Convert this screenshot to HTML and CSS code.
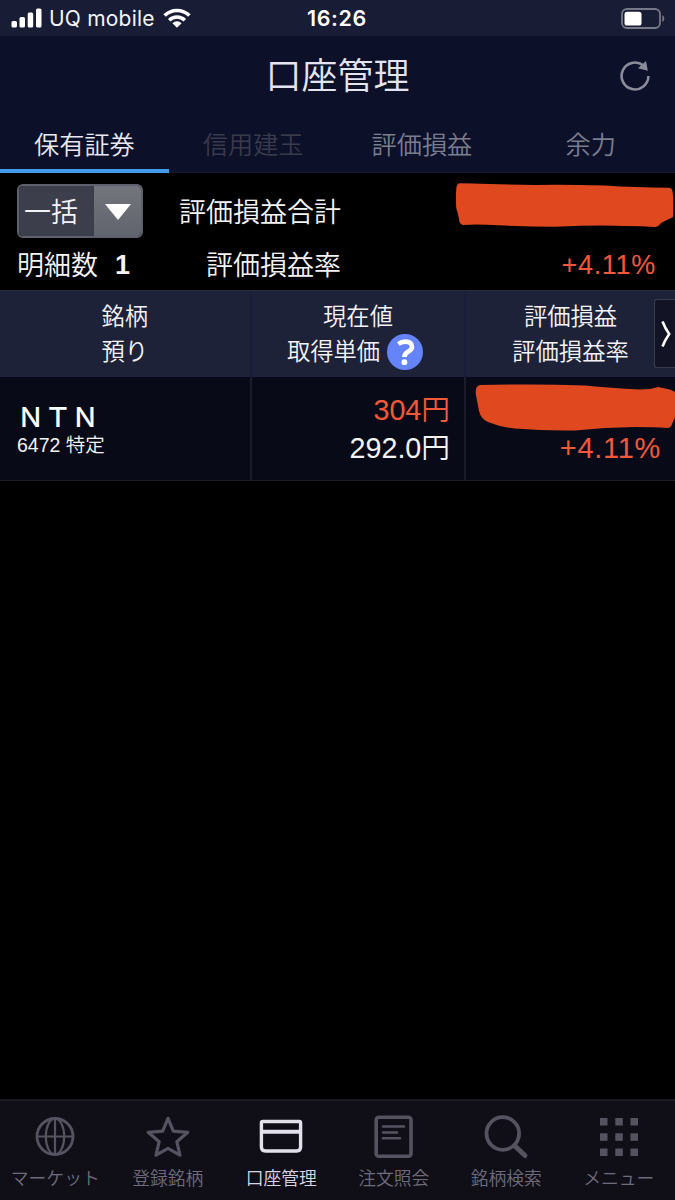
FILE: index.html
```html
<!DOCTYPE html>
<html lang="ja">
<head>
  <meta charset="UTF-8" />
  <meta name="viewport" content="width=device-width, initial-scale=1.0" />
  <title>口座管理</title>
  <link rel="stylesheet" href="styles.css">
</head>
<body>

  <div class="status-bar">
    <div class="carrier">
      <svg class="signal" width="31" height="20" viewBox="0 0 31 20" fill="#fff">
        <rect x="0.5" y="13" width="5.5" height="6.5" rx="1.5" />
        <rect x="8.5" y="9" width="5.5" height="10.5" rx="1.5" />
        <rect x="16.7" y="4.5" width="5.5" height="15" rx="1.5" />
        <rect x="25" y="0.5" width="5.5" height="19" rx="1.5" />
      </svg>
      <span class="carrier-name">UQ mobile</span>
      <svg width="28" height="20" viewBox="0 0 28 20" fill="none" stroke="#fff" stroke-width="3.6">
        <path d="M1.6 7.6a17.5 17.5 0 0 1 24.8 0" />
        <path d="M6.2 12.2a11 11 0 0 1 15.6 0" />
        <path d="M9.4 15.2a6.5 6.5 0 0 1 9.2 0L14 19.8z" fill="#fff" stroke="none" />
      </svg>
    </div>
    <div class="clock">16:26</div>
    <svg class="battery" width="44" height="21" viewBox="0 0 44 21">
      <rect x="1" y="1" width="38" height="19" rx="5" fill="none" stroke="#777988" stroke-width="1.8" />
      <rect x="3.5" y="3.7" width="17" height="13.8" rx="2.6" fill="#fff" />
      <path d="M41.3 7v7q2-1.2 2-3.5t-2-3.5z" fill="#777988" />
    </svg>
  </div>

  <div class="header">
    <h1>口座管理</h1>
    <svg class="reload" width="32" height="32" viewBox="0 0 32 32">
      <path d="M29.4 16A13.4 13.4 0 1 1 24.2 5.4" fill="none" stroke="#8b8c9b" stroke-width="2.6" />
      <path d="M27 1L28.8 10.8L19 8.2z" fill="#8b8c9b" />
    </svg>
  </div>

  <div class="tabs">
    <div class="tab active">保有証券</div>
    <div class="tab disabled">信用建玉</div>
    <div class="tab">評価損益</div>
    <div class="tab">余力</div>
  </div>

  <div class="summary">
    <div class="summary-row">
      <div class="select">
        <span class="select-text">一括</span>
        <span class="select-arrow">
          <svg width="26" height="16" viewBox="0 0 26 16"><path d="M0 0h26L13 16z" fill="#fff" /></svg>
        </span>
      </div>
      <span class="label">評価損益合計</span>
      <svg class="marker" width="220" height="47" viewBox="0 0 220 47">
        <path d="M5 1.2Q2 1 1.3 6Q.6 16 1.2 26Q3 31 4 37Q4 42 8 43Q20 42 32 42.8Q65 44.5 100 44.8Q145 42.5 170 44Q186 44 200 45Q203 45 206 41L218 35Q219 20 217.5 9Q217 6 214 5.8Q180 5.5 150 3.5Q110 2.5 80 3Q40 2.2 18 1.6z" fill="#e0491f" />
      </svg>
    </div>
    <div class="summary-row second">
      <span class="count-label">明細数</span>
      <span class="count">1</span>
      <span class="label">評価損益率</span>
      <span class="rate">+4.11%</span>
    </div>
  </div>

  <div class="table">
    <div class="cell head">
      <div class="head-line two">銘柄</div>
      <div class="head-line two">預り</div>
    </div>
    <div class="cell head">
      <div class="head-line">現在値</div>
      <div class="head-line help-line">
        取得単価
        <svg width="36" height="36" viewBox="0 0 36 36">
          <circle cx="18" cy="17" r="18" fill="#6684fa" />
          <path d="M11.3 9Q14.5 6.6 18.2 6.6Q25 6.6 25 11.8Q25 14.5 21.6 16.4Q17.5 18.4 17.5 22" fill="none" stroke="#fff" stroke-width="4.6" />
          <circle cx="17.4" cy="27.2" r="2.9" fill="#fff" />
        </svg>
      </div>
    </div>
    <div class="cell head">
      <div class="head-line">評価損益</div>
      <div class="head-line">評価損益率</div>
      <div class="next">
        <svg width="10" height="28" viewBox="0 0 10 28">
          <path d="M1.5 1.5Q4 8 8.2 14Q4 20 1.5 26.5" fill="none" stroke="#fff" stroke-width="2.6" />
        </svg>
      </div>
    </div>

    <div class="cell stock">
      <div class="stock-name">ＮＴＮ</div>
      <div class="stock-code">6472 特定</div>
    </div>
    <div class="cell price">
      <div class="up">304円</div>
      <div>292.0円</div>
    </div>
    <div class="cell profit">
      <svg class="marker" width="200" height="49" viewBox="0 0 200 49">
        <path d="M5 2Q0 3 .8 11L4 28Q6 36 13 39Q25 44 40 45.5Q70 48 100 47.5Q130 44 160 44Q180 44 192 45Q196 45 197 41L200 34V9Q196 6 190 5.5L183 4Q176 6.5 165 6.5Q135 5 110 2.5Q75 1.2 40 1.5z" fill="#e0491f" />
      </svg>
      <div class="up">+4.11%</div>
    </div>
  </div>

  <div class="nav">
    <div class="nav-item">
      <svg width="44" height="44" viewBox="0 0 44 44" fill="none" stroke="#55535f" stroke-width="2.2">
        <circle cx="22" cy="21.5" r="18" stroke-width="2.8" />
        <ellipse cx="22" cy="21.5" rx="9.2" ry="18" />
        <path d="M22 3.5v36M4 21.5h36" />
      </svg>
      <span>マーケット</span>
    </div>
    <div class="nav-item">
      <svg width="44" height="44" viewBox="0 0 44 44" fill="none" stroke="#55535f" stroke-width="3.2" stroke-linejoin="round">
        <path d="M22 3.3L27.3 16.1L41.8 17.3L30.8 26.7L34 40.2L22 33.3L10 40.2L13.2 26.7L2.2 17.3L16.7 16.1z" />
      </svg>
      <span>登録銘柄</span>
    </div>
    <div class="nav-item active">
      <svg width="44" height="44" viewBox="0 0 44 44" fill="none" stroke="#e2e1ec" stroke-width="3.4">
        <path d="M2.4 8q0-1.500 1.500-1.500h36.200q1.500 0 1.500 1.500v24q0 4-4 4h-31.200q-4 0-4-4z" />
        <path d="M2 16.800h40" stroke-width="4" />
      </svg>
      <span>口座管理</span>
    </div>
    <div class="nav-item">
      <svg width="44" height="44" viewBox="0 0 44 44" fill="none" stroke="#55535f">
        <rect x="4.2" y="2.3" width="34.8" height="39" rx="2.5" stroke-width="3.6" />
        <path d="M11 11.500h21M11 17.500h14M11 23.300h17" stroke-width="2.5" stroke-linecap="round" />
      </svg>
      <span>注文照会</span>
    </div>
    <div class="nav-item">
      <svg width="44" height="44" viewBox="0 0 44 44" fill="none" stroke="#55535f">
        <circle cx="18.8" cy="18.5" r="16.3" stroke-width="3.8" />
        <path d="M30.5 30.7L41 40.5" stroke-width="5" stroke-linecap="round" />
      </svg>
      <span>銘柄検索</span>
    </div>
    <div class="nav-item">
      <svg width="44" height="44" viewBox="0 0 44 44" fill="#55535f">
        <rect x="3" y="3" width="7.5" height="7.5" />
        <rect x="18.3" y="3" width="7.5" height="7.5" />
        <rect x="33.5" y="3" width="7.5" height="7.5" />
        <rect x="3" y="18.3" width="7.5" height="7.5" />
        <rect x="18.3" y="18.3" width="7.5" height="7.5" />
        <rect x="33.5" y="18.3" width="7.5" height="7.5" />
        <rect x="3" y="33.5" width="7.5" height="7.5" />
        <rect x="18.3" y="33.5" width="7.5" height="7.5" />
        <rect x="33.5" y="33.5" width="7.5" height="7.5" />
      </svg>
      <span>メニュー</span>
    </div>
  </div>

</body>
</html>
```
FILE: styles.css
```css
* {
  box-sizing: border-box;
}

html, body {
  margin: 0;
  padding: 0;
  height: 100%;
}

body {
  display: flex;
  flex-direction: column;
  background: #000;
  color: #f4f4f8;
  font-family: "Liberation Sans", "Noto Sans CJK JP", sans-serif;
  font-weight: 350;
  overflow: hidden;
}

svg {
  display: block;
  flex: none;
  overflow: visible;
}

.status-bar {
  display: grid;
  grid-template-columns: 1fr auto 1fr;
  align-items: center;
  height: 36px;
  padding: 0 10px 0 11px;
  background: #191c35;
  font-family: Inter, sans-serif;
  font-size: 21px;
}

.carrier {
  display: flex;
  align-items: center;
}

.carrier-name {
  margin: 0 8px 0 7px;
  font-weight: 400;
  letter-spacing: 0.2px;
}

.clock {
  font-weight: 600;
  color: #fff;
  font-size: 21.5px;
  letter-spacing: 0.6px;
  margin-right: 2px;
}

.battery {
  justify-self: end;
}

.header {
  display: grid;
  grid-template-columns: 1fr auto 1fr;
  align-items: center;
  height: 80px;
  padding: 0 24px;
  background: #0c1029;
}

.header h1 {
  grid-column: 2;
  margin: 0;
  padding-top: 2px;
  font-size: 36px;
  font-weight: 350;
  line-height: 78px;
  color: #e4e4f1;
}

.reload {
  justify-self: end;
}

.tabs {
  display: grid;
  grid-template-columns: repeat(4, 1fr);
  height: 57px;
  background: #0c1029;
  border-bottom: 1px solid #16182c;
}

.tab {
  height: 57px;
  border-bottom: 4px solid transparent;
  text-align: center;
  font-size: 25.2px;
  line-height: 59px;
  color: #7c7d8d;
}

.tab.active {
  color: #e8e8f4;
  border-color: #439ceb;
}

.tab.disabled {
  color: #393a4b;
}

.summary {
  height: 117px;
  padding: 10px 0 0 17px;
  font-size: 27px;
}

.summary-row {
  display: flex;
  align-items: center;
  height: 55px;
}

.summary-row.second {
  height: 51px;
}

.summary .label {
  width: 162px;
  margin-left: 36px;
  text-align: right;
  white-space: nowrap;
}

.summary .marker {
  margin: -11px 0 0 114px;
}

.select {
  display: flex;
  width: 126px;
  height: 54px;
  border: 2px solid #5e606b;
  border-radius: 6px;
  overflow: hidden;
}

.select-text {
  width: 75px;
  padding-left: 5px;
  background: #3d3e4c;
  line-height: 54px;
}

.select-arrow {
  display: flex;
  flex: 1;
  align-items: center;
  justify-content: center;
  padding-top: 2px;
  background: linear-gradient(#73757d, #62646d);
}

.count-label {
  width: 98px;
}

.count {
  width: 28px;
  padding-top: 3px;
  font-weight: 700;
}

.rate {
  flex: 1;
  padding: 4px 19px 0 0;
  text-align: right;
  color: #f4583b;
  letter-spacing: 0.7px;
}

.table {
  display: grid;
  grid-template-columns: 252px 214px 1fr;
  grid-template-rows: 87px 103px;
  border-bottom: 1px solid #1b1c27;
}

.cell {
  position: relative;
  background: #080b17;
  border-right: 2px solid #1a1b2b;
}

.cell:nth-child(3n) {
  border-right: none;
}

.cell.head {
  padding-top: 9px;
  background: #1e2239;
  border-top: 1px solid #292a3a;
  border-right-color: #1a1d38;
}

.head-line {
  height: 35px;
  text-align: center;
  font-size: 23.3px;
  line-height: 35px;
  white-space: nowrap;
}

.head-line.two {
  width: 47px;
  margin: 0 auto;
  text-align: left;
}

.help-line {
  display: flex;
  align-items: center;
  justify-content: center;
  gap: 7px;
  padding-right: 6px;
}

/* scroll button laid over the last header cell */
.next {
  position: absolute;
  top: 8px;
  right: 0;
  display: flex;
  align-items: center;
  width: 21px;
  height: 69px;
  padding-left: 6px;
  background: #121425;
  border: 1px solid #3a3c4e;
  border-right: none;
  border-radius: 3px 0 0 3px;
}

.stock {
  padding: 25px 0 0 17px;
}

.stock-name {
  font-size: 27.3px;
  font-weight: 500;
  line-height: 31px;
  color: #fff;
}

.stock-code {
  font-size: 19.5px;
  line-height: 25px;
}

.price {
  padding: 14px 14px 0 0;
  font-size: 28.7px;
  line-height: 38px;
  text-align: right;
}

.up {
  color: #f4583b;
}

.profit {
  padding-top: 6px;
  font-size: 29px;
}

.profit .marker {
  margin-left: auto;
}

.profit .up {
  padding-right: 14px;
  line-height: 32px;
  text-align: right;
  letter-spacing: 0.7px;
}

.nav {
  display: grid;
  grid-template-columns: repeat(6, 1fr);
  height: 101px;
  margin-top: auto;
  background: #100f18;
  border-top: 2px solid #1c1b24;
}

.nav-item {
  display: flex;
  flex-direction: column;
  align-items: center;
  padding: 14px 0 0;
  font-size: 17.8px;
  line-height: 40px;
  color: #6e6c7a;
  white-space: nowrap;
}

.nav-item:first-child,
.nav-item:nth-child(2) {
  padding-right: 2px;
}

.nav-item.active {
  color: #d8d7e3;
}
```
